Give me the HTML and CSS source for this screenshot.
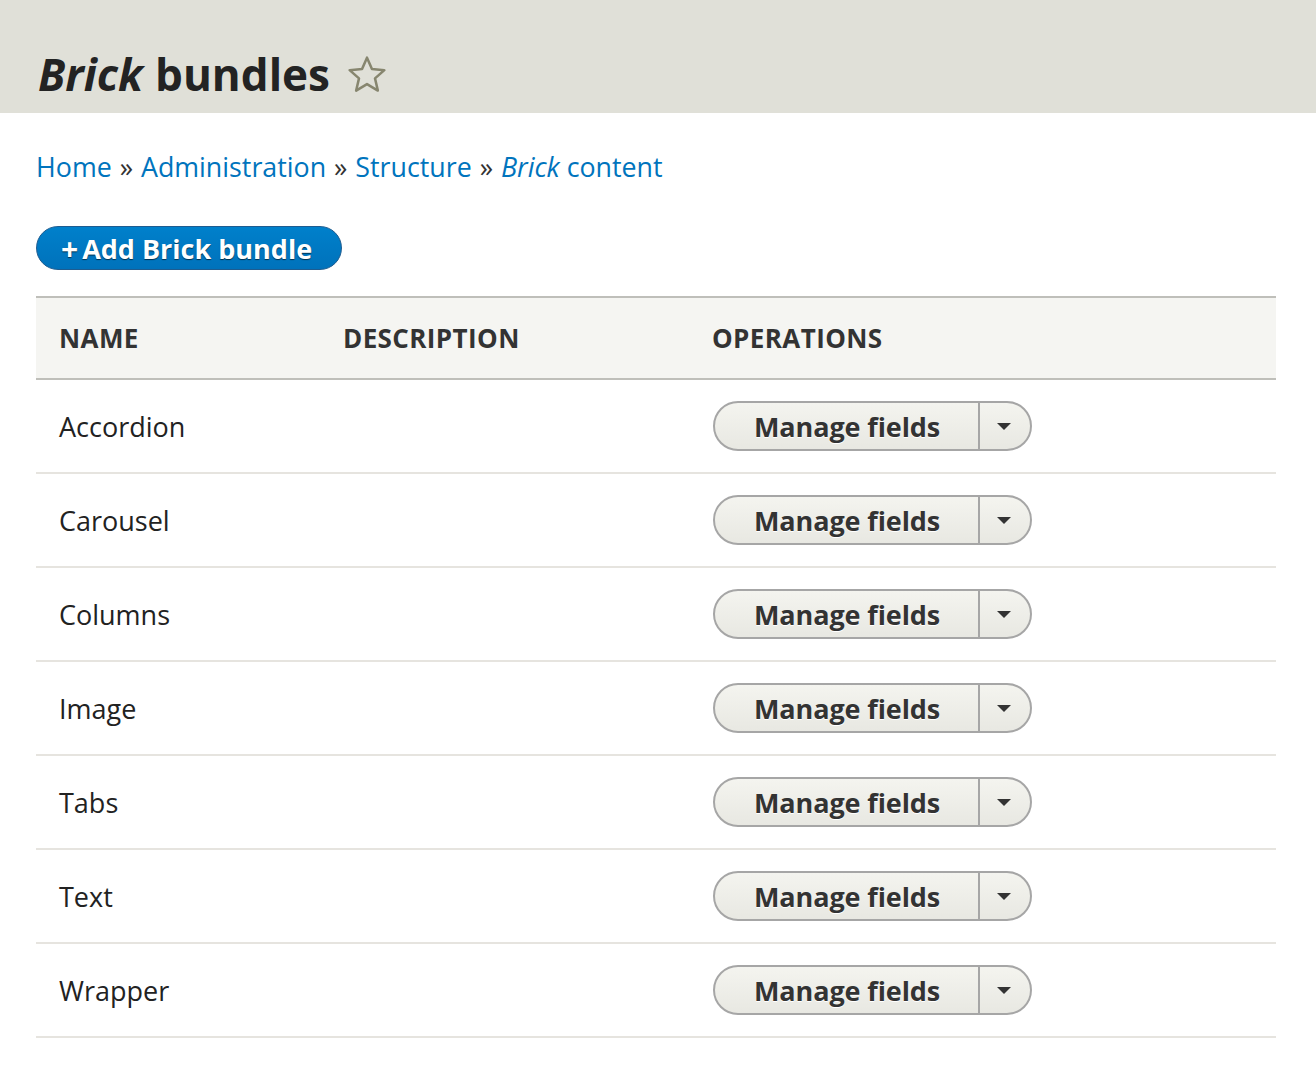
FILE: index.html
```html
<!DOCTYPE html>
<html>
<head>
<meta charset="utf-8">
<link rel="stylesheet" href="styles.css">
</head>
<body>
<header class="page-head">
  <h1 class="title"><em>Brick</em> bundles
    <svg class="star" width="40" height="40" viewBox="0 0 38 38"><path d="M19 2.5 L23.7 13.3 L35.5 14.4 L26.6 22.2 L29.3 33.8 L19 27.6 L8.7 33.8 L11.4 22.2 L2.5 14.4 L14.3 13.3 Z" fill="none" stroke="#87866f" stroke-width="2.4" stroke-linejoin="round"/></svg>
  </h1>
</header>
<main class="content">
  <nav class="breadcrumb">
    <a href="#">Home</a> <span class="sep">»</span> <a href="#">Administration</a> <span class="sep">»</span> <a href="#">Structure</a> <span class="sep">»</span> <a href="#"><em>Brick</em> content</a>
  </nav>
  <a class="action" href="#"><span class="plus">+</span>Add Brick bundle</a>
  <table class="bundles">
    <thead>
      <tr><th class="c-name">Name</th><th class="c-desc">Description</th><th class="c-ops">Operations</th></tr>
    </thead>
    <tbody>
      <tr><td>Accordion</td><td></td><td><div class="drop"><span class="main">Manage fields</span><span class="tog"><i></i></span></div></td></tr>
      <tr><td>Carousel</td><td></td><td><div class="drop"><span class="main">Manage fields</span><span class="tog"><i></i></span></div></td></tr>
      <tr><td>Columns</td><td></td><td><div class="drop"><span class="main">Manage fields</span><span class="tog"><i></i></span></div></td></tr>
      <tr><td>Image</td><td></td><td><div class="drop"><span class="main">Manage fields</span><span class="tog"><i></i></span></div></td></tr>
      <tr><td>Tabs</td><td></td><td><div class="drop"><span class="main">Manage fields</span><span class="tog"><i></i></span></div></td></tr>
      <tr><td>Text</td><td></td><td><div class="drop"><span class="main">Manage fields</span><span class="tog"><i></i></span></div></td></tr>
      <tr><td>Wrapper</td><td></td><td><div class="drop"><span class="main">Manage fields</span><span class="tog"><i></i></span></div></td></tr>
    </tbody>
  </table>
</main>
</body>
</html>
```
FILE: styles.css
```css
html, body { margin: 0; padding: 0; background: #fff; }
body { font-family: "Open Sans", "DejaVu Sans", sans-serif; color: #222330; }
.page-head { background: #e0e0d8; height: 113px; box-sizing: border-box; padding: 45px 36px 0 38px; }
.title { margin: 0; font-size: 44px; font-weight: 700; line-height: 58px; color: #232323; display: flex; align-items: center; }
.title em { font-style: italic; margin-right: 12px; }
.star { margin-left: 17px; margin-top: 2px; }
.content { padding: 0 40px 0 36px; }
.breadcrumb { padding-top: 34px; font-size: 26.8px; line-height: 40px; color: #333; }
.breadcrumb a { color: #0074bd; text-decoration: none; }
.breadcrumb .sep { margin: 0 1px; }
.action { display: inline-flex; align-items: center; margin-top: 39px; height: 44px; box-sizing: border-box; padding: 0 29px 0 24px; border: 1px solid #1e5c90; border-radius: 22px; background: linear-gradient(#0080cb, #0072bb); color: #fff; font-size: 27px; font-weight: 700; text-decoration: none; text-shadow: 0 1px 1px rgba(0,0,0,0.6); }
.action .plus { margin-right: 4px; font-size: 30px; }
.bundles { width: 1240px; border-collapse: collapse; margin-top: 26px; }
.bundles thead tr { background: #f5f5f2; border-top: 2px solid #bfbfba; border-bottom: 2px solid #bfbfba; }
.bundles th { text-align: left; text-transform: uppercase; font-weight: 700; font-size: 26px; letter-spacing: 0.4px; color: #333; height: 80px; padding: 0 0 0 23px; }
.c-name { width: 261px; }
.c-desc { width: 346px; }
.bundles td { height: 92px; border-bottom: 2px solid #e6e4df; padding: 0 0 0 23px; font-size: 27px; color: #222; }
.bundles td:last-child { padding-left: 24px; }
.drop { display: inline-flex; height: 50px; box-sizing: border-box; border: 2px solid #a6a6a6; border-radius: 25px; background: linear-gradient(#f4f4ef, #e8e8e2); overflow: hidden; }
.drop .main { display: flex; align-items: center; padding: 0 38px 0 39px; font-size: 27px; font-weight: 700; letter-spacing: -0.1px; color: #333; border-right: 2px solid #a6a6a6; text-shadow: 0 1px 0 #fff; }
.drop .tog { width: 50px; display: flex; align-items: center; justify-content: center; }
.drop .tog i { width: 0; height: 0; border-left: 7px solid transparent; border-right: 7px solid transparent; border-top: 7px solid #333; margin-left: -3px; }
```
